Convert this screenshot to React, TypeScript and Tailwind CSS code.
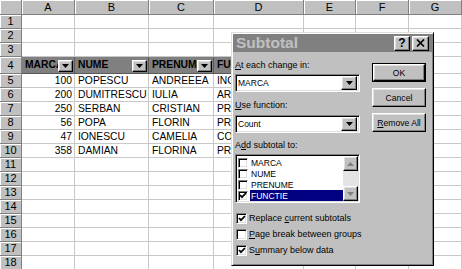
import React from "react";

const colW = ["w-[53px]", "w-[74px]", "w-[65px]", "w-[90px]", "w-[52px]", "w-[53px]", "w-[53px]"];
const letters = ["A", "B", "C", "D", "E", "F", "G"];

const headerRow = ["MARCA", "NUME", "PRENUME", "FUNCTIE"];
const data: [number, string, string, string][] = [
  [100, "POPESCU", "ANDREEEA", "INGINER"],
  [200, "DUMITRESCU", "IULIA", "ARHITECT"],
  [250, "SERBAN", "CRISTIAN", "PROGRAMATOR"],
  [56, "POPA", "FLORIN", "PROFESOR"],
  [47, "IONESCU", "CAMELIA", "CONTABIL"],
  [358, "DAMIAN", "FLORINA", "PROGRAMATOR"],
];

const raised =
  "border border-t-white border-l-white border-b-black border-r-black shadow-[inset_-1px_-1px_#808080,inset_1px_1px_#dfdfdf]";
const sunken =
  "border border-t-[#808080] border-l-[#808080] border-b-white border-r-white shadow-[inset_1px_1px_#000,inset_-1px_-1px_#dfdfdf]";

function Arrow({ color = "#000", up = false }: { color?: string; up?: boolean }) {
  return (
    <svg width="7" height="4" viewBox="0 0 7 4">
      <polygon points={up ? "0,4 7,4 3.5,0" : "0,0 7,0 3.5,4"} fill={color} />
    </svg>
  );
}

function Check() {
  return (
    <svg width="8" height="7" viewBox="0 0 8 7">
      <polyline points="1,3 3,5.2 7,1" fill="none" stroke="#000" strokeWidth="1.8" />
    </svg>
  );
}

function CheckBox({ checked, size = "w-[11px] h-[11px]" }: { checked: boolean; size?: string }) {
  return (
    <div className={`${size} bg-white ${sunken} flex items-center justify-center shrink-0`}>
      {checked && <Check />}
    </div>
  );
}

function RowNum({ n, h }: { n?: number; h: string }) {
  return (
    <div
      className={`w-[22px] ${h} shrink-0 bg-[#c0c0c0] border-r border-b border-[#808080] shadow-[inset_1px_1px_#fff] flex items-center justify-center text-[11px] text-black`}
    >
      {n}
    </div>
  );
}

function Sheet() {
  const rows = Array.from({ length: 18 }, (_, i) => i + 1);
  return (
    <div className="flex flex-col">
      <div className="flex">
        <RowNum h="h-[15px]" />
        {letters.map((l, i) => (
          <div
            key={l}
            className={`${colW[i]} h-[15px] shrink-0 bg-[#c0c0c0] border-r border-b border-[#808080] shadow-[inset_1px_1px_#fff] flex items-center justify-center text-[11px]`}
          >
            {l}
          </div>
        ))}
      </div>
      {rows.map((r) => {
        const h = r === 4 ? "h-[17px]" : "h-[14px]";
        const d = r >= 5 && r <= 10 ? data[r - 5] : null;
        return (
          <div key={r} className="flex">
            <RowNum n={r} h={h} />
            {letters.map((l, i) => {
              if (r === 4 && i < 4) {
                return (
                  <div
                    key={l}
                    className={`${colW[i]} ${h} shrink-0 relative overflow-hidden bg-[#808080] border-r border-b border-[#5a5a5a] flex items-center pl-[3px] text-[10.3px] font-bold text-black`}
                  >
                    {headerRow[i]}
                    <div
                      className={`absolute right-[1px] top-[3px] w-[15px] h-[12px] bg-[#c0c0c0] ${raised} flex items-center justify-center`}
                    >
                      <Arrow />
                    </div>
                  </div>
                );
              }
              let text: React.ReactNode = null;
              if (d && i < 4) text = d[i];
              return (
                <div
                  key={l}
                  className={`${colW[i]} ${h} shrink-0 overflow-hidden whitespace-nowrap bg-white border-r border-b border-[#c8c8c8] flex items-center text-[10.3px] text-black ${
                    i === 0 ? "justify-end pr-[2px]" : "pl-[3px]"
                  }`}
                >
                  {text}
                </div>
              );
            })}
          </div>
        );
      })}
    </div>
  );
}

function Combo({ value }: { value: string }) {
  return (
    <div className={`h-[18px] w-[125px] bg-white ${sunken} flex items-center justify-between pl-[2px] pr-[2px]`}>
      <span className="text-[8.5px] text-black">{value}</span>
      <div className={`w-[16px] h-[14px] bg-[#c0c0c0] ${raised} flex items-center justify-center`}>
        <Arrow />
      </div>
    </div>
  );
}

function Btn({ children, def = false }: { children: React.ReactNode; def?: boolean }) {
  return (
    <div className={def ? "border border-black" : ""}>
      <div
        className={`${def ? "h-[17px]" : "h-[19px]"} w-full bg-[#c0c0c0] ${raised} flex items-center justify-center text-[8.6px] text-black`}
      >
        {children}
      </div>
    </div>
  );
}

function Dialog() {
  const items = [
    { label: "MARCA", checked: false },
    { label: "NUME", checked: false },
    { label: "PRENUME", checked: false },
    { label: "FUNCTIE", checked: true },
  ];
  return (
    <div className="absolute left-[231px] top-[32px] w-[203px] h-[234px] bg-[#c0c0c0] border border-t-[#dfdfdf] border-l-[#dfdfdf] border-b-black border-r-black shadow-[inset_1px_1px_#fff,inset_-1px_-1px_#808080] p-[1px] flex flex-col">
      <div className="h-[18px] bg-[#808080] flex items-center justify-between pl-[3px] pr-[3px]">
        <span className="text-[15.5px] font-bold text-[#c0c0c0] leading-none">Subtotal</span>
        <div className="flex gap-[2px]">
          <div className={`w-[16px] h-[15px] bg-[#c0c0c0] ${raised} flex items-center justify-center text-[12px] font-bold leading-none`}>
            ?
          </div>
          <div className={`w-[17px] h-[15px] bg-[#c0c0c0] ${raised} flex items-center justify-center`}>
            <svg width="9" height="8" viewBox="0 0 9 8">
              <path d="M1 0.5 L8 7.5 M8 0.5 L1 7.5" stroke="#000" strokeWidth="1.7" />
            </svg>
          </div>
        </div>
      </div>
      <div className="flex px-[2px] text-[9px] text-black leading-[10px]">
        <div className="w-[125px] flex flex-col">
          <div className="mt-[8px] h-[10px]">
            <span className="underline">A</span>t each change in:
          </div>
          <div className="mt-[4px]">
            <Combo value="MARCA" />
          </div>
          <div className="mt-[8px] h-[10px]">
            <span className="underline">U</span>se function:
          </div>
          <div className="mt-[5px]">
            <Combo value="Count" />
          </div>
          <div className="mt-[7px] h-[10px]">
            A<span className="underline">d</span>d subtotal to:
          </div>
          <div className={`mt-[4px] h-[49px] bg-white ${sunken} flex p-[1px]`}>
            <div className="flex-1 flex flex-col pt-[1px]">
              {items.map((it) => (
                <div key={it.label} className="h-[11px] flex items-center pl-[1px]">
                  <CheckBox checked={it.checked} size="w-[10px] h-[10px]" />
                  <span
                    className={`ml-[2px] h-[11px] flex-1 flex items-center pl-[1px] text-[8.5px] ${
                      it.checked ? "bg-[#000080] text-white" : "text-black"
                    }`}
                  >
                    {it.label}
                  </span>
                </div>
              ))}
            </div>
            <div className="w-[15px] flex flex-col">
              <div className={`h-[15px] bg-[#c0c0c0] ${raised} flex items-center justify-center`}>
                <Arrow up color="#808080" />
              </div>
              <div className="flex-1 bg-[#e4e4e4]" />
              <div className={`h-[15px] bg-[#c0c0c0] ${raised} flex items-center justify-center`}>
                <Arrow color="#808080" />
              </div>
            </div>
          </div>
        </div>
        <div className="ml-[12px] w-[54px] flex flex-col gap-[6px] mt-[11px]">
          <Btn def>OK</Btn>
          <Btn>Cancel</Btn>
          <Btn>
            <span className="underline">R</span>emove All
          </Btn>
        </div>
      </div>
      <div className="flex flex-col px-[3px] text-[9px] text-black leading-[12px]">
        <div className="mt-[9px] h-[12px] flex items-center gap-[2px]">
          <CheckBox checked />
          <span>
            Replace <span className="underline">c</span>urrent subtotals
          </span>
        </div>
        <div className="mt-[4px] h-[12px] flex items-center gap-[2px]">
          <CheckBox checked={false} />
          <span>
            <span className="underline">P</span>age break between groups
          </span>
        </div>
        <div className="mt-[4px] h-[12px] flex items-center gap-[2px]">
          <CheckBox checked />
          <span>
            S<span className="underline">u</span>mmary below data
          </span>
        </div>
      </div>
    </div>
  );
}

export default function App() {
  return (
    <div className="relative w-[462px] h-[269px] overflow-hidden bg-white font-['Liberation_Sans',Arial,sans-serif]">
      <Sheet />
      <Dialog />
    </div>
  );
}
